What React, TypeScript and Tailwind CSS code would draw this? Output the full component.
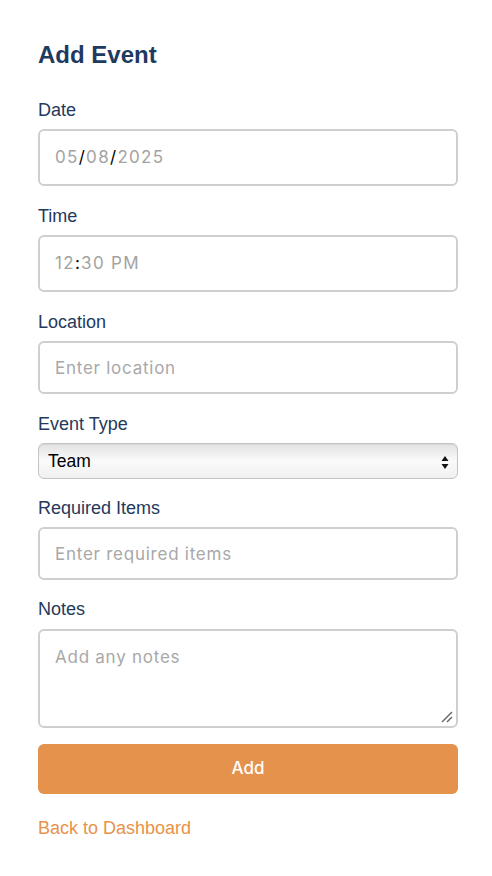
import React from 'react'

const label = 'block text-[18px] leading-[20px] text-[#24395c] mb-[9px]'
const box =
  'w-full border-2 border-[#cfcfcf] rounded-[6px] bg-white px-[15px] text-[17px] tracking-[0.75px] text-[#222] placeholder:text-[#a8a8a8] outline-none'
const sys = { fontFamily: 'Inter, "Noto Sans", sans-serif' }

export default function App() {
  return (
    <div className="min-h-[876px] w-[492px] bg-white" style={{ fontFamily: '"Liberation Sans", Arial, sans-serif' }}>
      <div className="w-[420px] ml-[38px] pt-[41px]">
        <h1 className="text-[24px] leading-[28px] font-bold text-[#1f3a5f] mb-[31px]">Add Event</h1>

        {/* Date */}
        <label className={label}>Date</label>
        <div
          className="h-[57px] flex items-center border-2 border-[#cfcfcf] rounded-[6px] px-[15px] text-[17px] tracking-[1.3px] text-[#a3a3a3] mb-[20px]"
          style={sys}
        >
          <span>05</span>
          <span className="text-black">/</span>
          <span>08</span>
          <span className="text-black">/</span>
          <span>2025</span>
        </div>

        {/* Time */}
        <label className={label}>Time</label>
        <div
          className="h-[57px] flex items-center border-2 border-[#cfcfcf] rounded-[6px] px-[15px] text-[17px] tracking-[1.3px] text-[#a3a3a3] mb-[20px]"
          style={sys}
        >
          <span>12</span>
          <span className="text-black">:</span>
          <span>30 PM</span>
        </div>

        {/* Location */}
        <label className={label}>Location</label>
        <input className={box + ' h-[53px] mb-[20px]'} style={sys} placeholder="Enter location" />

        {/* Event Type */}
        <label className={label}>Event Type</label>
        <div className="relative h-[36px] mb-[19px] rounded-[6px] border border-[#c4c4c4] bg-gradient-to-b from-[#e2e2e2] via-[#fafafa] to-[#f0f0f0] shadow-[inset_0_1px_1px_rgba(0,0,0,0.05)]">
          <div className="flex items-center h-full pl-[9px] text-[17.5px] text-black">Team</div>
          <svg className="absolute right-[8px] top-[12px]" width="8" height="13" viewBox="0 0 8 13">
            <path d="M4 0 L7.5 5 L0.5 5 Z" fill="#111" />
            <path d="M4 13 L7.5 8 L0.5 8 Z" fill="#111" />
          </svg>
        </div>

        {/* Required Items */}
        <label className={label}>Required Items</label>
        <input className={box + ' h-[53px] mb-[19px]'} style={sys} placeholder="Enter required items" />

        {/* Notes */}
        <label className={label + ' mb-[10px]'}>Notes</label>
        <div className="relative mb-[16px]">
          <textarea
            className={box + ' h-[99px] pt-[14px] resize-none block'}
            style={sys}
            placeholder="Add any notes"
          />
          <svg className="absolute right-[4px] bottom-[4px]" width="14" height="14" viewBox="0 0 14 14">
            <line x1="2" y1="12" x2="12" y2="2" stroke="#666" strokeWidth="1.5" />
            <line x1="7" y1="12" x2="12" y2="7" stroke="#666" strokeWidth="1.5" />
          </svg>
        </div>

        <button
          type="button"
          className="w-full h-[50px] rounded-[6px] bg-[#e4924c] text-white text-[17px] font-medium"
          style={sys}
        >
          Add
        </button>

        <a href="#" className="block mt-[24px] text-[18px] leading-[20px] text-[#e8924a]">
          Back to Dashboard
        </a>
      </div>
    </div>
  )
}
